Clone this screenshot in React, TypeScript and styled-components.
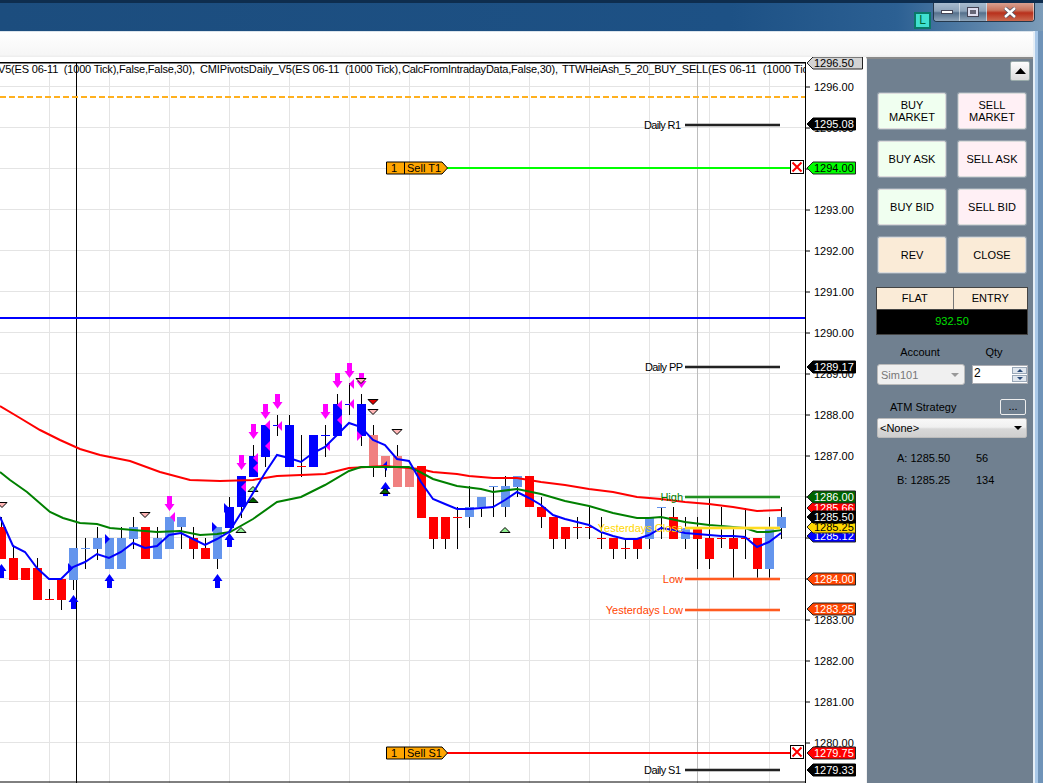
import React from 'react';
import styled, { createGlobalStyle } from 'styled-components';

const Global = createGlobalStyle`
  html, body { margin: 0; padding: 0; width: 1043px; height: 783px; overflow: hidden; background: #fff; }
  * { box-sizing: border-box; }
  body { font-family: "Liberation Sans", Arial, sans-serif; font-size: 11px; color: #000; }
`;

const Page = styled.div`
  width: 1043px; height: 783px; display: flex; flex-direction: column; overflow: hidden;
  background: #6f93b8;
`;
const TitleBar = styled.div`
  height: 31px; flex: none; display: flex; justify-content: flex-end; align-items: flex-start;
  border-top: 3px solid #0e2d4e; padding-right: 8px;
  background: linear-gradient(90deg, #1c4d7e 0%, #1d5185 70%, #2c6093 86%, #7c9cb9 100%);
`;
const Badge = styled.div`
  width: 17px; height: 17px; margin-top: 9px; margin-right: 2px; background: #40e0d0; border: 2px solid #0a7868;
  font-size: 12px; line-height: 13px; text-align: center; color: #063;
`;
const WinButtons = styled.div`
  display: flex; width: 102px; height: 19px; border: 1px solid #24384c; border-top: none; border-radius: 0 0 4px 4px; overflow: hidden;
  box-shadow: 0 0 0 1px rgba(255,255,255,.45) inset;
`;
const WinBtn = styled.div<{ $w: number; $close?: boolean }>`
  width: ${p => p.$w}px; display: flex; align-items: center; justify-content: center;
  border-right: 1px solid rgba(255,255,255,.5);
  background: ${p => p.$close
    ? 'linear-gradient(#d9a090 0%, #c8735c 40%, #b8301c 55%, #c96a50 100%)'
    : 'linear-gradient(#a8bccf 0%, #8ca2b8 45%, #55708c 55%, #8fa5ba 100%)'};
`;
const Window = styled.div`
  flex: 1; display: flex; margin-right: 8px; flex-direction: column; background: #fff;
  border-right: 2px solid #e6eef6; box-shadow: 3px 0 0 #a9c8e8; min-height: 0;
`;
const Toolbar = styled.div`
  height: 26px; flex: none; border-top: 1px solid #dbe4ec; background: linear-gradient(#ffffff, #f6f6f6 90%, #ececec);
`;
const Content = styled.div`
  flex: 1; display: flex; min-height: 0;
`;
const ChartBox = styled.div`
  width: 866px; flex: none; height: 726px; background: #fff;
`;
const Panel = styled.div`
  width: 167px; flex: none; height: 726px; background: #708090; border-left: 1px solid #f2f2f2; border-top: 2px solid #8a8a8a;
  padding: 2px 3px 0 9px; display: flex; flex-direction: column;
`;
const UpRow = styled.div`
  display: flex; justify-content: flex-end;
`;
const UpBtn = styled.div`
  width: 20px; height: 20px; border: 1px solid #9aa; border-radius: 2px; background: linear-gradient(#fdfdfd, #dcdcdc);
  display: flex; align-items: center; justify-content: center;
`;
const BtnGrid = styled.div`
  display: grid; grid-template-columns: 68px 68px; column-gap: 12px; row-gap: 12px; margin: 12px 0 0 2px;
`;
const TradeBtn = styled.div<{ $bg: string }>`
  height: 36px; background: ${p => p.$bg}; border: 1px solid #dcdcdc; border-radius: 2px;
  box-shadow: 0 0 0 1px rgba(255,255,255,.25);
  display: flex; align-items: center; justify-content: center; text-align: center; font-size: 11px; line-height: 12px;
`;
const Position = styled.div`
  width: 152px; margin: 14px 0 0 0; border: 1px solid #444; display: flex; flex-direction: column;
`;
const PosHead = styled.div`
  display: flex; height: 22px; background: #faebd7; border-bottom: 1px solid #444;
`;
const PosCell = styled.div<{ $w: number }>`
  width: ${p => p.$w}px; text-align: center; line-height: 21px; & + & { border-left: 1px solid #777; }
`;
const PosValue = styled.div`
  height: 24px; background: #000; color: #00e000; text-align: center; line-height: 23px;
`;
const LabelRow = styled.div`
  display: flex; margin-top: 11px; height: 13px; line-height: 13px;
`;
const Lbl = styled.div<{ $w: number }>`
  width: ${p => p.$w}px; flex: none; text-align: center;
`;
const FieldRow = styled.div`
  display: flex; margin: 5px 0 0 1px; align-items: flex-start; gap: 7px;
`;
const AccountBox = styled.div`
  width: 88px; height: 21px; background: #f0f0f0; border: 1px solid #bbb; border-radius: 3px; color: #777; padding: 0 3px;
  display: flex; align-items: center; justify-content: space-between;
`;
const Caret = styled.span<{ $c: string }>`
  width: 0; height: 0; border-left: 4px solid transparent; border-right: 4px solid transparent; border-top: 4px solid ${p => p.$c}; margin-right: 2px;
`;
const Spin = styled.div`
  width: 56px; height: 19px; margin-top: 1px; background: #fff; border: 1px solid #abadb3; display: flex; justify-content: space-between; font-size: 12px; padding-left: 1px; color: #000; line-height: 15px;
`;
const SpinBtns = styled.div`
  width: 15px; display: flex; flex-direction: column; gap: 1px; padding: 1px 0;
`;
const SpinBtn = styled.div<{ $up?: boolean }>`
  flex: 1; background: #dfe6ee; border: 1px solid #9aa8b8; display: flex; align-items: center; justify-content: center;
  &::after { content: ""; width: 0; height: 0; border-left: 3px solid transparent; border-right: 3px solid transparent;
    ${p => p.$up ? 'border-bottom: 3px solid #2a4a78;' : 'border-top: 3px solid #2a4a78;'} }
`;
const AtmRow = styled.div`
  display: flex; justify-content: space-between; align-items: center; margin: 13px 0 0 14px; height: 17px;
`;
const DotBtn = styled.div`
  width: 26px; height: 16px; border: 1px solid #eee; border-radius: 2px; background: #708090; text-align: center; line-height: 13px; margin-right: 4px;
`;
const NoneBox = styled.div`
  width: 150px; height: 20px; margin: 3px 0 0 1px; border: 1px solid #bbb; border-radius: 2px; padding: 0 2px;
  background: linear-gradient(#f8f8f8, #f0f0f0 45%, #d8d8d8 55%, #cfcfcf);
  display: flex; align-items: center; justify-content: space-between; font-size: 11px;
`;
const Quote = styled.div<{ $first?: boolean }>`
  display: flex; margin: ${p => p.$first ? 14 : 9}px 0 0 21px; height: 13px; line-height: 13px;
`;
const QuotePrice = styled.div`
  width: 79px;
`;

/* ----- chart data ----- */
const OY = 57;
type Bar = [string, number, number, number, number];
const R = '#ff0000', L = '#6495ed', B = '#0000ff', P = '#f08080';
// colour, wickTop, bodyTop, bodyBottom, wickBottom (page pixels)
const bars: Bar[] = [
  [R,517,527,559,559],[R,545,558,580,580],[R,568,568,580,580],[R,558,568,600,600],[R,589,599,600,600],
  [R,579,579,600,610],[L,548,548,580,590],[L,538,548,549,569],[L,527,538,549,560],[L,538,538,569,569],
  [L,527,538,569,569],[L,517,527,539,549],[R,527,527,559,559],[L,527,538,559,559],[L,517,517,549,549],
  [L,517,517,527,549],[R,527,538,549,559],[R,538,548,559,559],[L,527,527,559,569],[B,497,507,528,528],
  [B,476,476,507,518],[B,445,456,477,477],[B,425,425,457,467],[B,415,425,426,436],[B,415,425,467,467],
  [R,435,466,467,477],[B,435,435,467,467],[B,425,435,436,457],[B,394,404,436,436],[B,383,404,405,415],
  [B,394,404,436,446],[P,425,435,467,477],[P,456,456,467,477],[P,445,456,487,487],[P,467,467,487,487],
  [R,466,466,518,518],[R,517,517,539,549],[R,517,517,539,549],[R,507,517,518,549],[L,486,507,517,528],
  [L,497,497,507,517],[L,486,486,486,517],[L,476,486,507,517],[L,476,476,487,497],[R,476,476,507,507],
  [R,497,507,517,528],[R,517,517,539,549],[R,527,527,539,549],[R,517,527,528,539],[R,507,527,528,539],
  [R,517,538,539,549],[R,538,538,549,559],[R,538,548,549,559],[R,538,538,549,559],[L,517,517,539,549],
  [L,507,507,507,539],[R,507,517,539,539],[L,517,528,539,549],[R,517,528,539,569],[R,497,538,559,569],
  [R,507,538,539,548],[R,528,538,549,579],[R,508,538,539,559],[R,538,538,569,579],[L,517,528,569,579],
  [L,507,517,528,539],
];
const pts = (a: number[][]) => a.map(([x, y]) => `${x},${y - OY}`).join(' ');
const blueLine = pts([[0,517],[13,546],[25,552],[37,568],[49,579],[61,579],[73,567],[85,562],[97,554],[109,558],[121,552],[133,543],[145,548],[157,546],[169,535],[181,533],[193,539],[205,545],[217,539],[229,532],[241,513],[253,493],[265,473],[277,455],[289,458],[301,462],[313,453],[325,447],[337,435],[349,423],[361,427],[373,440],[385,445],[397,459],[409,461],[421,482],[433,499],[445,504],[457,509],[469,509],[481,508],[493,507],[505,500],[517,492],[529,498],[541,505],[553,515],[565,519],[577,522],[589,525],[601,532],[613,536],[625,539],[637,539],[649,535],[661,528],[673,530],[685,533],[697,534],[709,535],[721,536],[733,536],[745,537],[757,547],[769,542],[781,533]]);
const greenLine = pts([[0,472],[10,480],[27,492],[50,512],[63,518],[80,523],[97,524],[110,528],[133,530],[157,532],[180,531],[200,535],[217,534],[230,532],[253,519],[277,502],[301,497],[325,485],[349,471],[361,467],[385,467],[409,467],[420,472],[433,479],[457,486],[481,489],[493,492],[517,489],[541,494],[565,501],[589,506],[613,513],[637,518],[649,518],[661,517],[685,522],[709,525],[733,527],[745,528],[757,532],[769,532],[781,530]]);
const redLine = pts([[0,406],[20,418],[40,430],[60,440],[80,449],[100,455],[130,461],[160,472],[190,480],[220,481],[253,480],[277,476],[325,474],[349,468],[385,466],[420,469],[433,472],[457,474],[469,476],[493,478],[517,478],[541,482],[565,485],[589,489],[613,492],[637,497],[661,499],[685,502],[709,504],[733,507],[757,511],[781,510]]);

const downArrows = [[169,496],[241,455],[253,424],[265,404],[277,394],[325,404],[337,373],[349,363],[361,373]];
const upArrows = [[1,564],[73,595],[109,574],[217,574],[229,533],[385,482]];
const magentaLeft = [[246,487],[258,458],[258,468],[270,425],[270,446],[282,426],[330,446],[342,405],[342,420],[354,384],[354,404],[175,517]];
const magentaRight = [[357,436]];
const blueRight = [[68,568],[105,539],[212,527],[224,508]];
const triDown: [number, number, string][] = [[2,505,'#ffb6b6'],[145,515,'#ffb6b6'],[361,381,'#ffb6b6'],[373,402,'#e00000'],[373,412,'#ffb6b6'],[397,432,'#ffb6b6']];
const triUp: [number, number, string][] = [[253,489,'#90ee90'],[253,500,'#006400'],[241,530,'#90ee90'],[385,491,'#006400'],[505,530,'#90ee90']];

const axisPrices = ['1296.00','1295.00','1294.00','1293.00','1292.00','1291.00','1290.00','1289.00','1288.00','1287.00','1286.00','1285.00','1284.00','1283.00','1282.00','1281.00','1280.00'];

const tags: [number, string, string, string][] = [
  [63,'1296.50','#d3d3d3','#000'],[124,'1295.08','#000','#fff'],[168,'1294.00','#00ff00','#000'],[367,'1289.17','#000','#fff'],
  [536,'1285.12','#0000ff','#fff'],[508,'1285.66','#ff0000','#fff'],[497,'1286.00','#006400','#fff'],
  [527,'1285.25','#ffd700','#000'],[517,'1285.50','#000','#fff'],
  [579,'1284.00','#ff4500','#fff'],[609,'1283.25','#ff4500','#fff'],[753,'1279.75','#ff0000','#fff'],[770,'1279.33','#000','#fff'],
];

const hLevels: [string, number, string, string, number, number | undefined][] = [
  ['Daily R1',125,'#000','#888',681,37],['Daily PP',367,'#000','#888',683,38],['Daily S1',770,'#000','#888',681,37],
  ['High',497,'#008000','#7fbf7f',683,undefined],['Low',579,'#ff4500','#ff9f80',683,undefined],['Yesterdays Low',610,'#ff4500','#ff9f80',683,undefined],
  ['Yesterdays Close',528,'#ffd700','#ffe97f',683,undefined],
];

const OrderTag: React.FC<{ y: number; label: string; color: string }> = ({ y, label, color }) => {
  const t = y - OY;
  return (
    <g>
      <line x1={447} x2={790} y1={t} y2={t} stroke={color} strokeWidth={2} />
      <polygon points={`386.5,${t - 6} 442,${t - 6} 447.5,${t} 442,${t + 6} 386.5,${t + 6}`} fill="#ffa500" stroke="#000" />
      <line x1={404.5} x2={404.5} y1={t - 6} y2={t + 6} stroke="#000" />
      <ChartText x={394} y={t + 4} textAnchor="middle">1</ChartText>
      <ChartText x={407} y={t + 4}>{label}</ChartText>
      <rect x={790.5} y={t - 7.5} width={13} height={13} fill="#fff" stroke="#000" />
      <path d={`M792.5 ${t - 5.5}L801.5 ${t + 3.5}M801.5 ${t - 5.5}L792.5 ${t + 3.5}`} stroke="#f00" strokeWidth={2} />
    </g>
  );
};

const ChartText = styled.text`
  font-family: "Liberation Sans", Arial, sans-serif; font-size: 11px; fill: #000; white-space: pre;
`;
const ChartSvg = styled.svg`
  display: block; overflow: hidden;
`;

const Chart: React.FC = () => {
  const verts: number[] = [];
  for (let x = 49; x < 805; x += 60) verts.push(x);
  return (
    <ChartSvg width={866} height={726} viewBox="0 0 866 726">
      <defs><clipPath id="plot"><rect x={0} y={5} width={805} height={721} /></clipPath></defs>
      <rect x={0} y={0} width={866} height={726} fill="#fff" />
      <g clipPath="url(#plot)" shapeRendering="crispEdges">
        {verts.map(x => <line key={x} x1={x + .5} x2={x + .5} y1={0} y2={726} stroke="#e4e4e4" />)}
        {axisPrices.map((_, i) => <line key={i} x1={0} x2={805} y1={30 + i * 41 - .5} y2={30 + i * 41 - .5} stroke="#e4e4e4" />)}
        <line x1={697.5} x2={697.5} y1={0} y2={726} stroke="#bdbdbd" />
        <line x1={76.5} x2={76.5} y1={0} y2={726} stroke="#000" />
      </g>
      <line x1={0} x2={805} y1={40} y2={40} stroke="#ffb01e" strokeWidth={2} strokeDasharray="6 3" />
      <line x1={0} x2={805} y1={261} y2={261} stroke="#0000ff" strokeWidth={2} />
      <g clipPath="url(#plot)">
        <g shapeRendering="crispEdges">
          {bars.map((b, i) => {
            const x = 1 + i * 12;
            const h = b[3] - b[2];
            return (
              <g key={i}>
                <line x1={x + .5} x2={x + .5} y1={b[1] - OY} y2={b[4] - OY} stroke="#000" />
                {h <= 1
                  ? <line x1={x - 4} x2={x + 5} y1={b[2] - OY + .5} y2={b[2] - OY + .5} stroke={b[0]} />
                  : <rect x={x - 4} y={b[2] - OY} width={9} height={h} fill={b[0]} />}
              </g>
            );
          })}
        </g>
        {upArrows.map(([x, y], i) => (
          <polygon key={i} points={`${x + .5},${y - OY} ${x + 5.5},${y - OY + 7} ${x + 3},${y - OY + 7} ${x + 3},${y - OY + 14} ${x - 2},${y - OY + 14} ${x - 2},${y - OY + 7} ${x - 4.5},${y - OY + 7}`} fill="#0000ff" />
        ))}
        {downArrows.map(([x, y], i) => (
          <polygon key={i} points={`${x - 2},${y - OY} ${x + 3},${y - OY} ${x + 3},${y - OY + 8} ${x + 5.5},${y - OY + 8} ${x + .5},${y - OY + 15} ${x - 4.5},${y - OY + 8} ${x - 2},${y - OY + 8}`} fill="#ff00ff" />
        ))}
        {magentaLeft.map(([x, y], i) => <polygon key={i} points={`${x - 5},${y - OY} ${x},${y - OY - 5} ${x},${y - OY + 5}`} fill="#ff00ff" />)}
        {magentaRight.map(([x, y], i) => <polygon key={i} points={`${x + 5},${y - OY} ${x},${y - OY - 5} ${x},${y - OY + 5}`} fill="#ff00ff" />)}
        {blueRight.map(([x, y], i) => <polygon key={i} points={`${x + 5},${y - OY} ${x},${y - OY - 5} ${x},${y - OY + 5}`} fill="#0000ff" />)}
        <polygon points={`382,${466 - OY} 387,${461 - OY} 387,${471 - OY}`} fill="#0000ff" />
        {triDown.map(([x, y, c], i) => <polygon key={i} points={`${x - 5},${y - OY - 2.5} ${x + 5},${y - OY - 2.5} ${x},${y - OY + 2.5}`} fill={c} stroke="#000" />)}
        {triUp.map(([x, y, c], i) => <polygon key={i} points={`${x - 5},${y - OY + 2.5} ${x + 5},${y - OY + 2.5} ${x},${y - OY - 2.5}`} fill={c} stroke="#000" />)}
        <polyline points={redLine} fill="none" stroke="#ff0000" strokeWidth={2} />
        <polyline points={greenLine} fill="none" stroke="#008000" strokeWidth={2} />
        <polyline points={blueLine} fill="none" stroke="#0000ff" strokeWidth={2} />
      </g>
      {hLevels.map(([label, y, c, halo, tx, len]) => (
        <g key={label}>
          <line x1={685} x2={780} y1={y - OY} y2={y - OY} stroke={halo} strokeWidth={3} />
          <line x1={685} x2={780} y1={y - OY} y2={y - OY} stroke={c} strokeWidth={1.5} />
          <ChartText x={tx} y={y - OY + 4} textAnchor="end" textLength={len} style={{ fill: c }}>{label}</ChartText>
        </g>
      ))}
      <OrderTag y={168} label="Sell T1" color="#00ff00" />
      <OrderTag y={753} label="Sell S1" color="#ff0000" />
      <g clipPath="url(#plot)">
        <ChartText x={-2} y={16} textLength={197}>V5(ES 06-11  (1000 Tick),False,False,30),</ChartText>
        <ChartText x={200} y={16} textLength={201}>CMIPivotsDaily_V5(ES 06-11  (1000 Tick),</ChartText>
        <ChartText x={402} y={16} textLength={156}>CalcFromIntradayData,False,30),</ChartText>
        <ChartText x={562} y={16} textLength={146}>TTWHeiAsh_5_20_BUY_SELL</ChartText>
        <ChartText x={708} y={16}>(ES 06-11  (1000 Tick</ChartText>
      </g>
      <rect x={0} y={5} width={805} height={1.5} fill="#000" />
      <line x1={805.5} x2={805.5} y1={5} y2={726} stroke="#000" />
      <line x1={0} x2={805} y1={725} y2={725} stroke="#000" />
      {axisPrices.map((p, i) => {
        const y = 30 + i * 41;
        return (
          <g key={p}>
            <line x1={805} x2={810} y1={y} y2={y} stroke="#000" />
            <ChartText x={814} y={y + 4}>{p}</ChartText>
          </g>
        );
      })}
      {tags.map(([y, t, bg, fg]) => {
        const c = y - OY;
        const right = t === '1296.50' ? 862.5 : 855.5;
        return (
          <g key={t}>
            <polygon points={`807,${c} 813,${c - 6} ${right},${c - 6} ${right},${c + 6} 813,${c + 6}`} fill={bg} stroke={bg === '#000' ? '#000' : '#222'} />
            <ChartText x={814} y={c + 4} style={{ fill: fg }}>{t}</ChartText>
          </g>
        );
      })}
    </ChartSvg>
  );
};

export default function App() {
  return (
    <Page>
      <Global />
      <TitleBar>
        <Badge>L</Badge>
        <WinButtons>
          <WinBtn $w={27}>
            <svg width="12" height="5"><rect x="0.5" y="0.5" width="11" height="3" fill="#fff" stroke="#445" /></svg>
          </WinBtn>
          <WinBtn $w={27}>
            <svg width="12" height="10"><rect x="0.5" y="0.5" width="11" height="9" fill="#dde" stroke="#445" /><rect x="3" y="3" width="6" height="4" fill="#667" /></svg>
          </WinBtn>
          <WinBtn $w={48} $close>
            <svg width="14" height="11"><path d="M2 1L12 10M12 1L2 10" stroke="#556" strokeWidth="4" /><path d="M2 1L12 10M12 1L2 10" stroke="#fff" strokeWidth="2.4" /></svg>
          </WinBtn>
        </WinButtons>
      </TitleBar>
      <Window>
        <Toolbar />
        <Content>
          <ChartBox><Chart /></ChartBox>
          <Panel>
            <UpRow>
              <UpBtn><svg width="11" height="6"><path d="M5.5 0L11 6H0Z" fill="#000" /></svg></UpBtn>
            </UpRow>
            <BtnGrid>
              <TradeBtn $bg="#f0fff0">BUY<br />MARKET</TradeBtn>
              <TradeBtn $bg="#fff0f5">SELL<br />MARKET</TradeBtn>
              <TradeBtn $bg="#f0fff0">BUY ASK</TradeBtn>
              <TradeBtn $bg="#fff0f5">SELL ASK</TradeBtn>
              <TradeBtn $bg="#f0fff0">BUY BID</TradeBtn>
              <TradeBtn $bg="#fff0f5">SELL BID</TradeBtn>
              <TradeBtn $bg="#faebd7">REV</TradeBtn>
              <TradeBtn $bg="#faebd7">CLOSE</TradeBtn>
            </BtnGrid>
            <Position>
              <PosHead><PosCell $w={76}>FLAT</PosCell><PosCell $w={75}>ENTRY</PosCell></PosHead>
              <PosValue>932.50</PosValue>
            </Position>
            <LabelRow><Lbl $w={88}>Account</Lbl><Lbl $w={60}>Qty</Lbl></LabelRow>
            <FieldRow>
              <AccountBox>Sim101<Caret $c="#999" /></AccountBox>
              <Spin>2<SpinBtns><SpinBtn $up /><SpinBtn /></SpinBtns></Spin>
            </FieldRow>
            <AtmRow>ATM Strategy<DotBtn>...</DotBtn></AtmRow>
            <NoneBox>&lt;None&gt;<Caret $c="#000" /></NoneBox>
            <Quote $first><QuotePrice>A: 1285.50</QuotePrice>56</Quote>
            <Quote><QuotePrice>B: 1285.25</QuotePrice>134</Quote>
          </Panel>
        </Content>
      </Window>
    </Page>
  );
}
